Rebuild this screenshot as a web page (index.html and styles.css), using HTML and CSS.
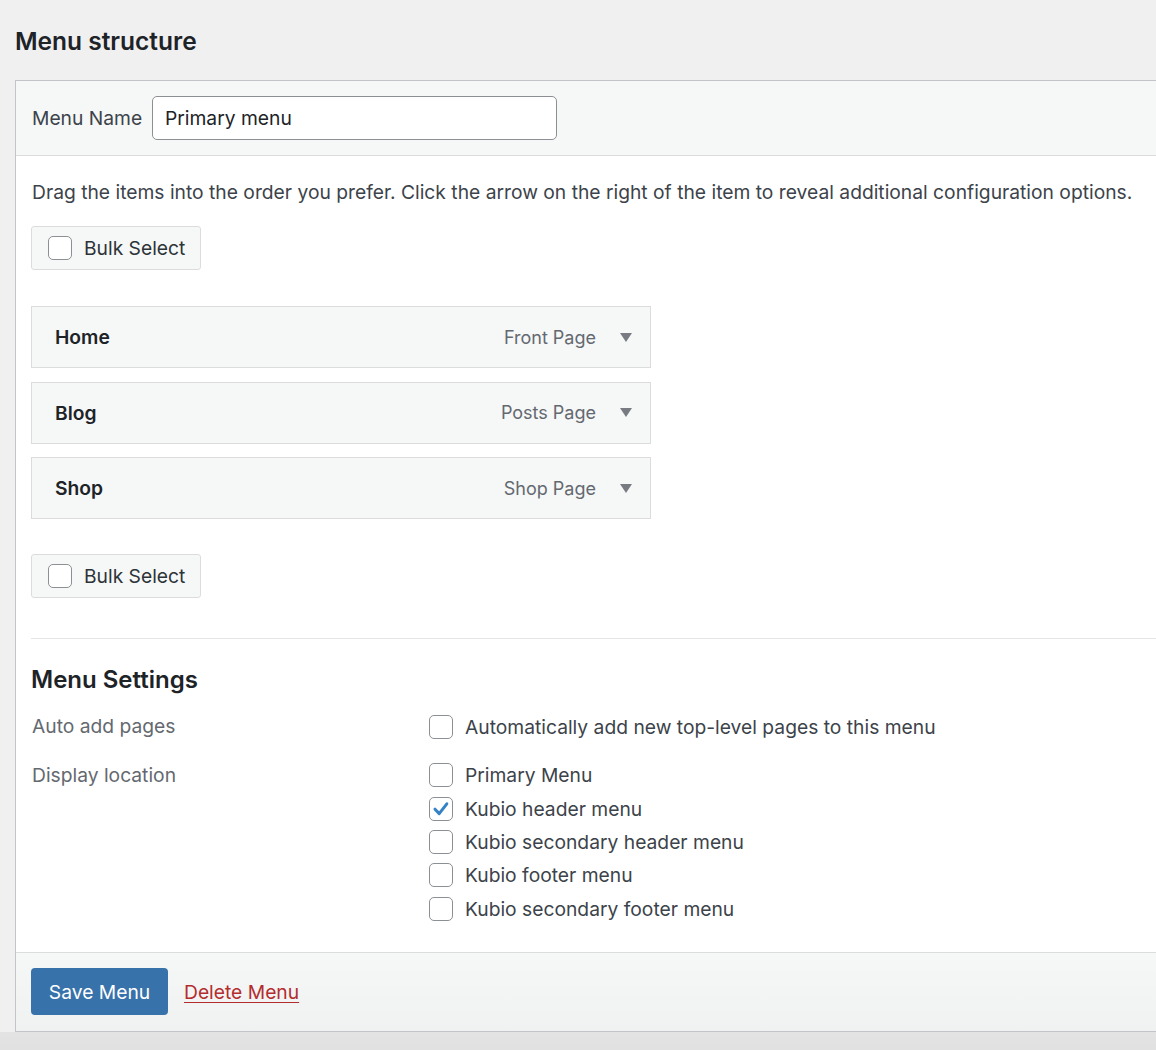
FILE: index.html
```html
<!DOCTYPE html>
<html lang="en">
<head>
<meta charset="utf-8">
<title>Menu structure</title>
<link rel="stylesheet" href="styles.css">
</head>
<body>
<div class="wrap">
  <h2 class="page-title">Menu structure</h2>
  <div class="menu-box">
    <div class="menu-header">
      <label class="name-label" for="menu-name">Menu Name</label>
      <input id="menu-name" class="name-input" type="text" value="Primary menu">
    </div>
    <div class="menu-body">
      <p class="desc">Drag the items into the order you prefer. Click the arrow on the right of the item to reveal additional configuration options.</p>
      <label class="bulk-btn bulk-top"><span class="cb"></span><span>Bulk Select</span></label>

      <ul class="items">
        <li class="item"><span class="item-title">Home</span><span class="item-type">Front Page</span><span class="arrow"></span></li>
        <li class="item"><span class="item-title">Blog</span><span class="item-type">Posts Page</span><span class="arrow"></span></li>
        <li class="item"><span class="item-title">Shop</span><span class="item-type">Shop Page</span><span class="arrow"></span></li>
      </ul>

      <label class="bulk-btn"><span class="cb"></span><span>Bulk Select</span></label>

      <div class="settings">
        <h3 class="settings-title">Menu Settings</h3>
        <div class="row row-auto">
          <div class="row-label">Auto add pages</div>
          <div class="row-opts">
            <label class="opt"><span class="cb"></span>Automatically add new top-level pages to this menu</label>
          </div>
        </div>
        <div class="row">
          <div class="row-label">Display location</div>
          <div class="row-opts">
            <label class="opt"><span class="cb"></span>Primary Menu</label>
            <label class="opt"><span class="cb checked"><svg viewBox="0 0 24 24" width="24" height="24"><path d="M6 12.2 L10.2 16.6 L17.8 6.8" fill="none" stroke="#3582c4" stroke-width="3" stroke-linecap="round" stroke-linejoin="round"/></svg></span>Kubio header menu</label>
            <label class="opt"><span class="cb"></span>Kubio secondary header menu</label>
            <label class="opt"><span class="cb"></span>Kubio footer menu</label>
            <label class="opt"><span class="cb"></span>Kubio secondary footer menu</label>
          </div>
        </div>
      </div>
    </div>
    <div class="menu-footer">
      <button class="save-btn" type="button">Save Menu</button>
      <a class="delete-link" href="#">Delete Menu</a>
    </div>
  </div>
  <div class="bottom-shade"></div>
</div>
</body>
</html>
```

FILE: styles.css
```css
* { box-sizing: border-box; }
html, body { margin: 0; padding: 0; }
body {
  background: #f0f0f1;
  font-family: "Inter", "Roboto", "Liberation Sans", sans-serif;
  font-size: 19.25px;
  color: #3c434a;
  overflow: hidden;
}
.wrap { padding-left: 15px; }
.page-title {
  margin: 0;
  padding-top: 26px;
  font-size: 24.5px;
  line-height: 30px;
  font-weight: 600;
  color: #1d2327;
}
.menu-box {
  margin-top: 24px;
  background: #fff;
  border: 1px solid #c3c4c7;
  border-right: none;
}
.menu-header {
  display: flex;
  align-items: center;
  background: #f6f7f7;
  border-bottom: 1px solid #dcdcde;
  padding: 15px 16px;
}
.name-label { width: 120px; color: #3c434a; }
.name-input {
  width: 405px;
  height: 44px;
  border: 1px solid #8c8f94;
  border-radius: 5px;
  padding: 0 12px;
  font: inherit;
  color: #1d2327;
  background: #fff;
}
.menu-body { padding: 0 0 0 15px; }
.desc {
  margin: 0;
  padding-top: 23px;
  line-height: 27px;
  padding-left: 1px;
}
.bulk-btn {
  display: flex;
  align-items: center;
  gap: 12px;
  height: 44px;
  width: max-content;
  white-space: nowrap;
  padding: 0 15px 0 16px;
  background: #f6f7f7;
  border: 1px solid #dcdcde;
  border-radius: 3px;
  color: #2c3338;
}
.bulk-top { margin-top: 20px; }
.cb {
  display: inline-block;
  flex: none;
  width: 24px;
  height: 24px;
  border: 1px solid #8c8f94;
  border-radius: 5px;
  background: #fff;
  position: relative;
}
.cb svg { position: absolute; left: -1px; top: -1px; }
.items {
  list-style: none;
  margin: 36px 0 35px;
  padding: 0;
}
.item {
  display: flex;
  align-items: center;
  width: 620px;
  height: 62px;
  padding: 0 18px 0 23px;
  margin-bottom: 13.5px;
  background: #f6f7f7;
  border: 1px solid #dcdcde;
}
.item:last-child { margin-bottom: 0; }
.item-title { font-weight: 600; color: #1d2327; flex: 1; }
.item-type { color: #646970; font-size: 18px; }
.arrow {
  width: 0; height: 0;
  margin-left: 24px;
  border-left: 6px solid transparent;
  border-right: 6px solid transparent;
  border-top: 9px solid #787c82;
}
.settings {
  margin-top: 40px;
  border-top: 1px solid #e5e5e5;
  padding-bottom: 27px;
}
.settings-title {
  margin: 26px 0 0;
  font-size: 24px;
  line-height: 30px;
  font-weight: 600;
  color: #1d2327;
}
.row { display: flex; }
.row-auto { margin-top: 15px; margin-bottom: 15.5px; }
.row-label { width: 398px; padding-left: 1px; color: #646970; line-height: 33.33px; }
.row-opts { display: flex; flex-direction: column; }
.opt {
  display: flex;
  align-items: center;
  gap: 12px;
  height: 33.33px;
  color: #3c434a;
}
.menu-footer {
  display: flex;
  align-items: center;
  background: linear-gradient(#f6f7f7, #f0f1f1);
  border-top: 1px solid #dcdcde;
  padding: 15px 16px 16px 15px;
}
.save-btn {
  height: 47px;
  width: 137px;
  background: #3872aa;
  color: #fff;
  border: none;
  border-radius: 4px;
  font: inherit;
  padding: 0;
}
.delete-link {
  margin-left: 16px;
  color: #b32d2e;
  text-decoration: underline;
  text-underline-offset: 3px;
}
.bottom-shade {
  margin-left: -15px;
  height: 40px;
  background: linear-gradient(#e3e3e3, #dedede);
}
```
